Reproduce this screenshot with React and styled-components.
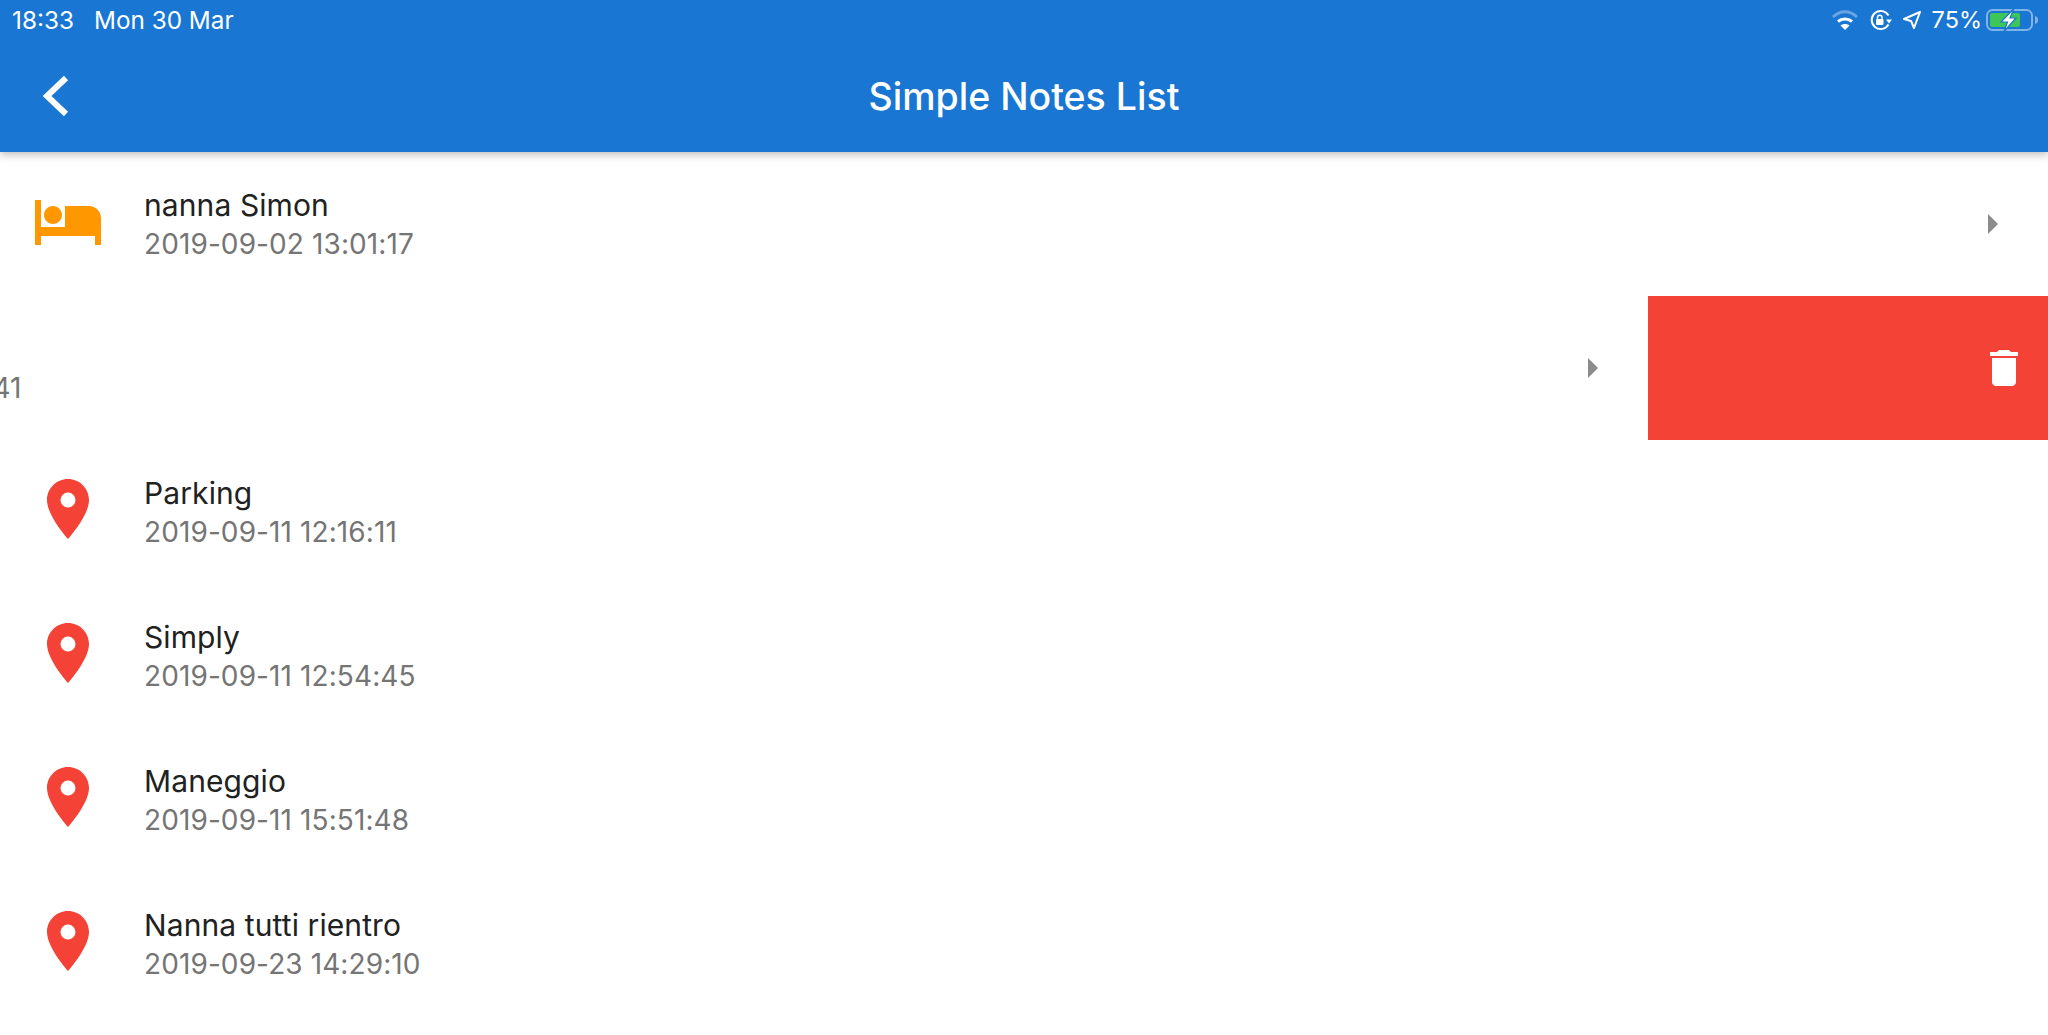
import React from 'react';
import styled, { createGlobalStyle } from 'styled-components';

const GlobalStyle = createGlobalStyle`
  html, body {
    margin: 0;
    padding: 0;
    background: #fff;
    overflow: hidden;
  }
  body {
    font-family: Inter, "Liberation Sans", sans-serif;
  }
`;

const Page = styled.div`
  width: 2048px;
  height: 1035px;
  display: flex;
  flex-direction: column;
  overflow: hidden;
  background: #fff;
`;

const Header = styled.header`
  flex: none;
  height: 152px;
  display: flex;
  flex-direction: column;
  background: #1976d2;
  color: #fff;
  box-shadow: 0 3px 8px rgba(0, 0, 0, 0.25);
  position: relative;
  z-index: 1;
`;

const StatusBar = styled.div`
  flex: none;
  height: 39px;
  padding: 0 10px 1px 12px;
  display: flex;
  align-items: center;
  justify-content: space-between;
  font-size: 24.3px;
`;

const StatusGroup = styled.div`
  display: flex;
  align-items: center;
  gap: ${p => p.$gap}px;
  svg { display: block; }
`;

const BatteryLevel = styled.span`
  font-size: 23.5px;
`;

const Toolbar = styled.div`
  flex: 1;
  display: grid;
  grid-template-columns: 112px 1fr 112px;
  align-items: center;
`;

const BackButton = styled.div`
  display: flex;
  align-items: center;
  padding-left: 40px;
`;

const Title = styled.h1`
  margin: 0;
  text-align: center;
  font-size: 37.5px;
  font-weight: 500;
`;

const List = styled.div`
  flex: 1;
  display: flex;
  flex-direction: column;
`;

const Row = styled.div`
  flex: none;
  height: 144px;
  display: flex;
  overflow: hidden;
`;

const RowContent = styled.div`
  flex: none;
  width: 2048px;
  box-sizing: border-box;
  margin-left: ${p => (p.$swiped ? -400 : 0)}px;
  padding: 0 32px;
  display: flex;
  align-items: center;
`;

const Leading = styled.div`
  flex: none;
  width: 112px;
  height: 78px;
  display: flex;
  align-items: flex-start;
  svg { display: block; }
`;

const RowText = styled.div`
  flex: 1;
  min-width: 0;
`;

const RowTitle = styled.div`
  font-size: 30px;
  line-height: 40px;
  letter-spacing: 0.1px;
  color: #212121;
`;

const RowDate = styled.div`
  font-size: 28px;
  line-height: 39px;
  letter-spacing: 0.1px;
  color: #757575;
`;

const DeleteAction = styled.div`
  flex: none;
  width: 400px;
  box-sizing: border-box;
  padding-right: 20px;
  background: #f44336;
  display: flex;
  align-items: center;
  justify-content: flex-end;
`;

const BedIcon = () => (
  <svg width="72" height="72" viewBox="0 0 24 24" fill="#ff9800">
    <path d="M7 13c1.66 0 3-1.34 3-3S8.66 7 7 7s-3 1.34-3 3 1.34 3 3 3zm12-6h-8v7H3V5H1v15h2v-3h18v3h2v-9c0-2.21-1.79-4-4-4z" />
  </svg>
);

const PinIcon = () => (
  <svg width="72" height="72" viewBox="0 0 24 24" fill="#f44336">
    <path d="M12 2C8.13 2 5 5.13 5 9c0 5.25 7 13 7 13s7-7.75 7-13c0-3.87-3.13-7-7-7zm0 9.5a2.5 2.5 0 0 1 0-5 2.5 2.5 0 0 1 0 5z" />
  </svg>
);

const ArrowIcon = () => (
  <svg width="48" height="48" viewBox="0 0 24 24" fill="#8c8c8c">
    <path d="M10 17l5-5-5-5v10z" />
  </svg>
);

const TrashIcon = () => (
  <svg width="48" height="48" viewBox="0 0 24 24" fill="#fff">
    <path d="M6 19c0 1.1.9 2 2 2h8c1.1 0 2-.9 2-2V7H6v12zM19 4h-3.5l-1-1h-5l-1 1H5v2h14V4z" />
  </svg>
);

const BackIcon = () => (
  <svg width="30" height="44" viewBox="0 0 30 44" fill="none" stroke="#fff" strokeWidth="6">
    <path d="M26 4 L7 22 L26 40" />
  </svg>
);

const WifiIcon = () => (
  <svg width="28" height="22" viewBox="0 0 28 22" fill="none" stroke="#fff" strokeWidth="3">
    <path d="M2 8 C9 1 19 1 26 8" strokeOpacity="0.35" />
    <path d="M7 12.5 C11 9 17 9 21 12.5" />
    <path d="M14 21 L9.5 16.5 C12 14.5 16 14.5 18.5 16.5 Z" fill="#fff" stroke="none" />
  </svg>
);

const RotationLockIcon = () => (
  <svg width="22" height="24" viewBox="0 0 22 24" fill="none" stroke="#fff" strokeWidth="2">
    <path d="M18.5 16.5 A9 9 0 1 1 18.5 7.5" />
    <path d="M16 11.5 L22 11.5 L19 15.5 Z" fill="#fff" stroke="none" />
    <rect x="6" y="11" width="7.5" height="6" rx="1" fill="#fff" stroke="none" />
    <path d="M7.5 11 V9.5 a2.2 2.2 0 0 1 4.5 0 V11" strokeWidth="1.5" />
  </svg>
);

const LocationIcon = () => (
  <svg width="18" height="18" viewBox="0 0 18 18" fill="none" stroke="#fff" strokeWidth="2" strokeLinejoin="round">
    <path d="M17 1 L1 8 L8 10 L11 17 Z" />
  </svg>
);

const BatteryIcon = () => (
  <svg width="52" height="24" viewBox="0 0 52 24">
    <rect x="1" y="2" width="45" height="20" rx="5.5" fill="none" stroke="#fff" strokeOpacity="0.45" strokeWidth="2" />
    <rect x="4" y="5" width="30" height="14" rx="2" fill="#3fc659" />
    <path d="M49 8 a4 4 0 0 1 3 4 a4 4 0 0 1 -3 4 Z" fill="#fff" fillOpacity="0.45" />
    <path d="M28 0.5 L15 14 L21.5 14 L18 23.5 L30 10 L24 10 Z" fill="#fff" stroke="#1976d2" strokeWidth="1.2" />
  </svg>
);

const notes = [
  { id: 1, icon: 'bed', title: 'nanna Simon', date: '2019-09-02 13:01:17', arrow: true },
  { id: 2, icon: 'pin', title: 'Pranzo', date: '2019-09-08 20:31:41', arrow: true, swiped: true },
  { id: 3, icon: 'pin', title: 'Parking', date: '2019-09-11 12:16:11' },
  { id: 4, icon: 'pin', title: 'Simply', date: '2019-09-11 12:54:45' },
  { id: 5, icon: 'pin', title: 'Maneggio', date: '2019-09-11 15:51:48' },
  { id: 6, icon: 'pin', title: 'Nanna tutti rientro', date: '2019-09-23 14:29:10' },
];

const App = () => (
  <Page>
    <GlobalStyle />
    <Header>
      <StatusBar>
        <StatusGroup $gap={20}>
          <span>18:33</span>
          <span>Mon 30 Mar</span>
        </StatusGroup>
        <StatusGroup $gap={11}>
          <WifiIcon />
          <RotationLockIcon />
          <LocationIcon />
          <StatusGroup $gap={4}>
            <BatteryLevel>75%</BatteryLevel>
            <BatteryIcon />
          </StatusGroup>
        </StatusGroup>
      </StatusBar>
      <Toolbar>
        <BackButton><BackIcon /></BackButton>
        <Title>Simple Notes List</Title>
      </Toolbar>
    </Header>
    <List>
      {notes.map(n => (
        <Row key={n.id}>
          <RowContent $swiped={n.swiped}>
            <Leading>{n.icon === 'bed' ? <BedIcon /> : <PinIcon />}</Leading>
            <RowText>
              <RowTitle>{n.title}</RowTitle>
              <RowDate>{n.date}</RowDate>
            </RowText>
            {n.arrow && <ArrowIcon />}
          </RowContent>
          {n.swiped && <DeleteAction><TrashIcon /></DeleteAction>}
        </Row>
      ))}
    </List>
  </Page>
);

export default App;
